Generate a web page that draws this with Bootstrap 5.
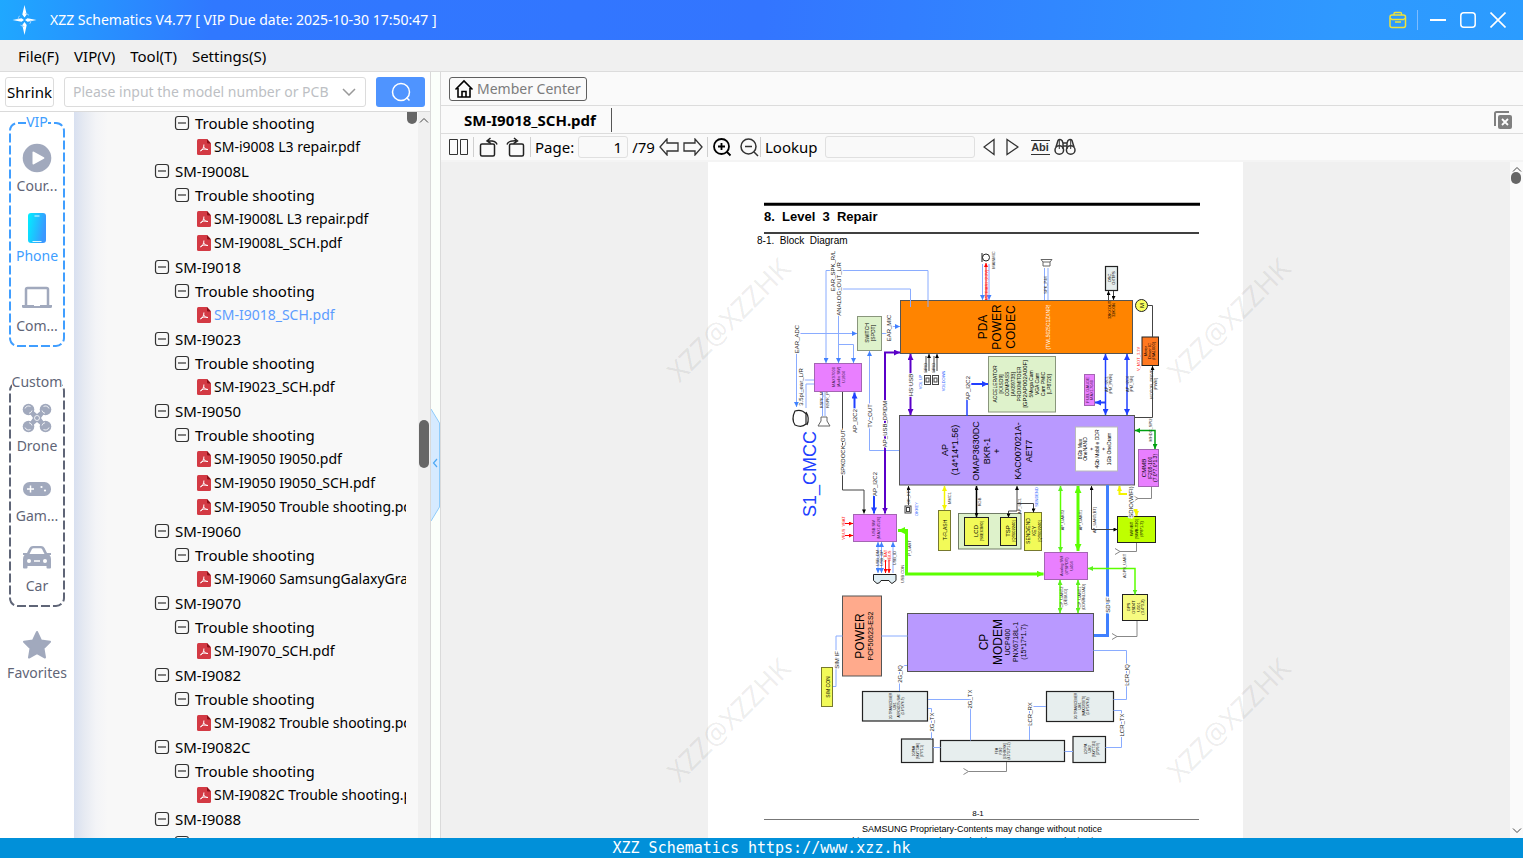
<!DOCTYPE html>
<html lang="en">
<head>
<meta charset="utf-8">
<meta name="viewport" content="width=device-width, initial-scale=1">
<title>XZZ Schematics</title>
<link href="https://cdn.jsdelivr.net/npm/bootstrap@5.3.0/dist/css/bootstrap.min.css" rel="stylesheet">
<style>
  body { font-family: "Noto Sans", "Open Sans", sans-serif; font-size: 15px; line-height: 24px; color: #000; background: #fafafa; }
  button { font: inherit; color: inherit; }
  svg { display: block; flex: none; }
  .titlebar, .menubar, .searchrow, .barrow, .toolstrip { flex: none; }
  .titlebar { height: 40px; padding: 0 17px 0 10px; font-size: 14px; color: #fff; background: linear-gradient(95deg, #1fa8ff 0, #3078ff 14%, #3375ff 50%, #2f99ff 88%, #2b9cff 100%); }
  .titlebar button, .toolstrip button, .plain { border: 0; background: none; padding: 0; }
  .titlebar .rule { width: 1px; height: 20px; margin: 0 12px 0 10px; background: #7ebcff; }
  .winbtns { gap: 14px; }
  .menubar { height: 32px; padding: 0 18px; gap: 15px; background: #f0f0f0; border-bottom: 1px solid #dcdcdc; }
  .menubar a { color: #000; text-decoration: none; }
  .left-pane { width: 431px; border-right: 1px solid #d9d9d9; background: #fff; }
  .searchrow { height: 40px; padding: 0 5px; border-bottom: 1px solid #dadada; }
  .boxed { height: 30px; border: 1px solid #dcdcdc; border-radius: 3px; background: #fff; }
  .shrink { width: 49px; padding: 0; margin-right: 10px; }
  .combo { flex: 1; margin-right: 10px; padding-right: 9px; font-size: 14px; }
  .combo input { border: 0; outline: 0; background: none; width: 100%; min-width: 0; padding: 0 0 0 8px; }
  .combo input::placeholder { color: #bdbfc4; opacity: 1; }
  .go { width: 49px; height: 30px; border: 0; border-radius: 3px; background: #4f94ff; }
  .catbar { width: 74px; padding-top: 10px; color: #5f6577; background: #fff; }
  .group { display: flow-root; width: 56px; height: 225px; margin: 0 auto; position: relative; }
  .group + .group { margin-top: 35px; }
  .group .outline { position: absolute; inset: 0; width: 100%; height: 100%; overflow: visible; }
  .group h2 { font-size: 14px; line-height: 20px; font-weight: 400; margin: -10px 0 0; position: relative; text-align: center; white-space: nowrap; }
  .group h2 span { background: #fff; display: inline-block; }
  .vip { color: #409eff; }
  .cat { display: flex; flex-direction: column; align-items: center; width: 100%; height: 70px; padding: 9px 0 0; border: 0; background: none; font-size: 14px; line-height: 20px; color: #5f6577; position: relative; white-space: nowrap; }
  .cat svg { width: 34px; height: 34px; margin-bottom: 1px; }
  .cat.active { color: #409eff; }
  .favorites { margin-top: 12px; }
  .tree-pane { background: linear-gradient(90deg, #d8e0f0 0, #e6eaf2 10px, #f3f4f7 22px, #f8f8f8 34px); overflow: hidden; position: relative; }
  .tree { list-style: none; margin: -1px 12px 0 0; padding: 0 0 0 80px; overflow: hidden; }
  .tree ul { list-style: none; margin: 0; padding: 0 0 0 20px; }
  .node { display: flex; align-items: center; height: 24px; gap: 5px; white-space: nowrap; color: #000; text-decoration: none; }
  .node svg { width: 16px; height: 16px; }
  .file { padding-left: 2px; gap: 2px; font-size: 14px; }
  .file.selected { color: #5c9cff; }
  .vscroll { width: 12px; background: #f0f0f0; position: relative; }
  .thumb { position: absolute; background: #666; border-radius: 5px; width: 10px; left: 1px; }
  .thumb-side { top: 308px; height: 48px; }
  .thumb-tree { left: auto; right: 1px; top: -8px; height: 20px; }
  .thumb-view { top: 10px; height: 12px; }
  .splitter { width: 10px; padding-top: 20px; background: #fbfffb; border-right: 1px solid #dadada; }
  .barrow { background: #fafafa; border-bottom: 1px solid #dcdcdc; }
  .homerow { height: 34px; }
  .member { height: 24px; padding: 0 5px 0 4px; border: 1px solid #5f5f5f; border-radius: 3px; color: #7c7c7c; background: #fafafa; gap: 3px; font-size: 14px; line-height: 20px; }
  .tabrow { height: 28px; padding-right: 11px; }
  .doctab { padding: 0 15px 0 23px; border-right: 1px solid #555; font-weight: 700; height: 24px; }
  .toolstrip { height: 28px; padding-left: 8px; background: #fafafa; border-bottom: 2px solid #f4f4f4; }
  .toolstrip .rule { width: 1px; height: 20px; background: #d0d0d0; }
  .toolstrip input { height: 22px; border: 1px solid #e0e0e0; border-radius: 3px; background: #f9f9f9; padding: 0 5px; outline: 0; }
  .pageno { width: 50px; text-align: right; }
  .lookup { width: 150px; }
  .viewer { background: #f0f0f0; overflow: hidden; }
  .paper { background: #fff; width: 535px; height: 757px; }
  .paper svg { overflow: visible; }
  .viewscroll { width: 13px; background: #fafafa; position: relative; }
  .flip { transform: rotate(180deg); }
  .statusbar { height: 20px; background: #0190d9; color: #fff; font: 15px/20px "DejaVu Sans Mono", monospace; text-align: center; }
  .statusbar a { color: #fff; text-decoration: none; }
  .sheet { font-family: "Liberation Sans", Arial, sans-serif; }
  .v { text-anchor: middle; }
  .t18 { font-size: 18px; } .t12 { font-size: 12px; } .t9 { font-size: 9px; } .t7 { font-size: 7px; } .t6 { font-size: 6px; } .t5 { font-size: 5px; } .t4 { font-size: 4px; } .t3 { font-size: 3px; }
  .lab { paint-order: stroke; stroke: #fff; stroke-width: 2px; }
  .wm { font-family: "Noto Sans", sans-serif; font-size: 28px; fill: #000; fill-opacity: .08; text-anchor: middle; }
</style>
</head>
<body class="vh-100 d-flex flex-column overflow-hidden">

<svg width="0" height="0" class="position-absolute" aria-hidden="true">
  <symbol id="minus" viewBox="0 0 16 16"><rect x="1.5" y="1.5" width="13" height="13" rx="2.5" fill="none" stroke="#333" stroke-width="1.2"/><path d="M4 8h8" stroke="#333" stroke-width="1.2"/></symbol>
  <symbol id="pdf" viewBox="0 0 16 16"><path d="M1 1.500q0-1.500 1.500-1.500H11l4 4.500V14.500q0 1.500-1.500 1.500h-11Q1 16 1 14.500z" fill="#d33a44"/><path d="M11 0l4 4.500h-3q-1 0-1-1z" fill="#8d1018"/><path d="M4.500 12c1.800-.6 3.700-4 3.400-6.500M7.600 7.500c.6 2 2.300 3.200 4.400 3M4.500 12c1-2 4-2.400 7.500-1.500" fill="none" stroke="#fff" stroke-width="1"/></symbol>
  <symbol id="up" viewBox="0 0 10 6"><path d="M1 5.500L5 1.500l4 4" fill="none" stroke="#444" stroke-width="1"/></symbol>
</svg>

<header class="titlebar d-flex align-items-center">
  <svg width="28" height="30" viewBox="0 0 28 30"><g fill="#fff"><path d="M14.500 0l2.200 9.500-2.200 3-2.200-3zM14.500 30l2.200-10-2.200-3-2.200 3zM2.500 15l9-1.800L14 15l-2.500 1.800zM26.500 15l-9-1.800L15 15l2.500 1.800z"/></g><circle cx="14.500" cy="15" r="6.500" fill="none" stroke="#9fd4ff" stroke-width="1" stroke-dasharray="4 6.200"/></svg>
  <span class="ms-2 ps-1 flex-grow-1">XZZ Schematics V4.77 [ VIP Due date: 2025-10-30 17:50:47 ]</span>
  <button aria-label="Toolbox"><svg width="18" height="18" viewBox="0 0 18 18" fill="none" stroke="#f0e438" stroke-width="1.500"><rect x="1" y="4" width="15.500" height="12.500" rx="2"/><path d="M5 4V2.500Q5 1.500 6 1.500h5.500q1 0 1 1V4M1 7l2 1.500h11.500L16.500 7M6 11h6" stroke-width="1.300"/></svg></button>
  <span class="rule"></span>
  <div class="winbtns d-flex align-items-center">
    <button aria-label="Minimize"><svg width="16" height="16" viewBox="0 0 16 16"><path d="M0 8h16" stroke="#fff" stroke-width="2"/></svg></button>
    <button aria-label="Maximize"><svg width="16" height="16" viewBox="0 0 16 16"><rect x=".8" y=".8" width="14.400" height="14.400" rx="3" fill="none" stroke="#fff" stroke-width="1.500"/></svg></button>
    <button aria-label="Close"><svg width="16" height="16" viewBox="0 0 16 16"><path d="M.5.500l15 15M15.500.500l-15 15" stroke="#fff" stroke-width="1.600"/></svg></button>
  </div>
</header>

<nav class="menubar d-flex align-items-center">
  <a href="#">File(F)</a><a href="#">VIP(V)</a><a href="#">Tool(T)</a><a href="#">Settings(S)</a>
</nav>

<main class="d-flex flex-grow-1 overflow-hidden">
  <section class="left-pane d-flex flex-column flex-shrink-0">
    <div class="searchrow d-flex align-items-center">
      <button class="boxed shrink">Shrink</button>
      <div class="boxed combo d-flex align-items-center">
        <input type="text" aria-label="Model number or PCB" placeholder="Please input the model number or PCB">
        <svg width="14" height="8" viewBox="0 0 14 8"><path d="M1 1l6 6 6-6" fill="none" stroke="#999" stroke-width="1.500"/></svg>
      </div>
      <button class="go d-flex align-items-center justify-content-center" aria-label="Search"><svg width="20" height="20" viewBox="0 0 20 20" fill="none" stroke="#fff" stroke-width="1.500"><circle cx="10" cy="10" r="8.500"/><path d="M15.500 15.500l3 3"/></svg></button>
    </div>
    <div class="d-flex flex-grow-1 overflow-hidden">
      <aside class="catbar flex-shrink-0">
        <div class="group vip">
          <svg class="outline" viewBox="0 0 56 225"><rect x="1" y="1" width="54" height="223" rx="8" fill="none" stroke="#409eff" stroke-width="2" stroke-dasharray="9 3"/></svg>
          <h2><span>VIP</span></h2>
          <button class="cat"><svg viewBox="0 0 34 34"><circle cx="17" cy="17" r="14.300" fill="#a1a9bd"/><path d="M12.500 11.500q0-1.500 1.400-.8l10 5.500q1.200.8 0 1.500l-10 5.500q-1.400.7-1.400-.8z" fill="#fff"/></svg>Cour...</button>
          <button class="cat active"><svg viewBox="0 0 34 34"><defs><linearGradient id="ph" y2=".3"><stop stop-color="#00f0ff"/><stop offset="1" stop-color="#3a98ff"/></linearGradient></defs><rect x="8" y="2" width="18" height="30" rx="3" fill="url(#ph)"/><path d="M14.500 5h5M12.500 30.500h9" stroke="#dffaff" stroke-width="1.200"/></svg>Phone</button>
          <button class="cat"><svg viewBox="0 0 34 34"><path d="M6 24V8.500Q6 7 7.500 7h19Q28 7 28 8.500V24" fill="none" stroke="#a1a9bd" stroke-width="2.500"/><path d="M2 24h30v1.500q0 1.500-1.500 1.500h-27Q2 27 2 25.500z" fill="#a1a9bd"/><path d="M14 24.500h6" stroke="#fff"/></svg>Com...</button>
        </div>
        <div class="group">
          <svg class="outline" viewBox="0 0 56 225"><rect x="1" y="1" width="54" height="223" rx="8" fill="none" stroke="#5f6577" stroke-width="2" stroke-dasharray="9 3"/></svg>
          <h2 class="d-flex justify-content-center"><span>Custom</span></h2>
          <button class="cat"><svg viewBox="0 0 34 34"><g fill="#a1a9bd"><path d="M8 10L10.500 7.500 17 13l6.500-5.500L26 10l-5 7 5 7-2.500 2.500L17 21l-6.500 5.500L8 24l5-7z"/><circle cx="8.500" cy="8.500" r="5.800"/><circle cx="25.500" cy="8.500" r="5.800"/><circle cx="8.500" cy="25.500" r="5.800"/><circle cx="25.500" cy="25.500" r="5.800"/></g><g fill="none" stroke="#fff" stroke-width=".8"><path d="M5 7.500a3.800 3.800 0 0 1 5.500-2M29 7.500a3.800 3.800 0 0 0-5.500-2M5 26.500a3.800 3.800 0 0 0 5.500 2M29 26.500a3.800 3.800 0 0 1-5.500 2"/><path d="M12 9.500a3.800 3.800 0 0 1-3 2.800M22 9.500a3.800 3.800 0 0 0 3 2.800M12 24.500a3.800 3.800 0 0 0-3-2.800M22 24.500a3.800 3.800 0 0 1 3-2.800"/><circle cx="17" cy="17" r="2.500"/></g></svg>Drone</button>
          <button class="cat"><svg viewBox="0 0 34 34"><rect x="3" y="11" width="28" height="14" rx="6.500" fill="#a1a9bd"/><path d="M7 18h7M10.500 14.500v7" stroke="#fff" stroke-width="1.500"/><circle cx="21.500" cy="16" r="1.100" fill="#fff"/><circle cx="25" cy="19.500" r="1.100" fill="#fff"/></svg>Gam...</button>
          <button class="cat"><svg viewBox="0 0 34 34"><path fill="#a1a9bd" fill-rule="evenodd" d="M3 12h4l2.500-5Q10.500 5 13 5h8q2.500 0 3.500 2L27 12h4v2h-1.500q1.500 1.500 1.500 4v8.500q0 1-1 1h-2.500q-1 0-1-1V25h-19v1.500q0 1-1 1H4q-1 0-1-1V18q0-2.500 1.500-4H3zm6.500 1h15L22 8q-.5-.8-1.500-.8h-7Q12.500 7.200 12 8z"/><circle cx="9" cy="20" r="2" fill="#fff"/><circle cx="25" cy="20" r="2" fill="#fff"/><path d="M14 20h6" stroke="#fff" stroke-width="1.500"/></svg>Car</button>
        </div>
        <button class="cat favorites"><svg viewBox="0 0 34 34"><path d="M17 4l4 8.500 9 1.300-6.500 6.500L25 29.500l-8-4.300-8 4.300 1.500-9.200L4 13.800l9-1.300z" fill="#a1a9bd" stroke="#a1a9bd" stroke-width="2" stroke-linejoin="round"/></svg>Favorites</button>
      </aside>
      <div class="tree-pane flex-grow-1">
        <span class="thumb thumb-tree"></span>
        <ul class="tree">
          <li><ul>
            <li><button class="node plain"><svg><use href="#minus"/></svg>Trouble shooting</button><ul>
              <li><a class="node file" href="#"><svg><use href="#pdf"/></svg>SM-i9008 L3 repair.pdf</a></li></ul></li></ul></li>
          <li><button class="node plain"><svg><use href="#minus"/></svg>SM-I9008L</button><ul>
            <li><button class="node plain"><svg><use href="#minus"/></svg>Trouble shooting</button><ul>
              <li><a class="node file" href="#"><svg><use href="#pdf"/></svg>SM-I9008L L3 repair.pdf</a></li>
              <li><a class="node file" href="#"><svg><use href="#pdf"/></svg>SM-I9008L_SCH.pdf</a></li></ul></li></ul></li>
          <li><button class="node plain"><svg><use href="#minus"/></svg>SM-I9018</button><ul>
            <li><button class="node plain"><svg><use href="#minus"/></svg>Trouble shooting</button><ul>
              <li><a class="node file selected" href="#"><svg><use href="#pdf"/></svg>SM-I9018_SCH.pdf</a></li></ul></li></ul></li>
          <li><button class="node plain"><svg><use href="#minus"/></svg>SM-I9023</button><ul>
            <li><button class="node plain"><svg><use href="#minus"/></svg>Trouble shooting</button><ul>
              <li><a class="node file" href="#"><svg><use href="#pdf"/></svg>SM-I9023_SCH.pdf</a></li></ul></li></ul></li>
          <li><button class="node plain"><svg><use href="#minus"/></svg>SM-I9050</button><ul>
            <li><button class="node plain"><svg><use href="#minus"/></svg>Trouble shooting</button><ul>
              <li><a class="node file" href="#"><svg><use href="#pdf"/></svg>SM-I9050 I9050.pdf</a></li>
              <li><a class="node file" href="#"><svg><use href="#pdf"/></svg>SM-I9050 I9050_SCH.pdf</a></li>
              <li><a class="node file" href="#"><svg><use href="#pdf"/></svg>SM-I9050 Trouble shooting.pdf</a></li></ul></li></ul></li>
          <li><button class="node plain"><svg><use href="#minus"/></svg>SM-I9060</button><ul>
            <li><button class="node plain"><svg><use href="#minus"/></svg>Trouble shooting</button><ul>
              <li><a class="node file" href="#"><svg><use href="#pdf"/></svg>SM-I9060 SamsungGalaxyGrand.pdf</a></li></ul></li></ul></li>
          <li><button class="node plain"><svg><use href="#minus"/></svg>SM-I9070</button><ul>
            <li><button class="node plain"><svg><use href="#minus"/></svg>Trouble shooting</button><ul>
              <li><a class="node file" href="#"><svg><use href="#pdf"/></svg>SM-I9070_SCH.pdf</a></li></ul></li></ul></li>
          <li><button class="node plain"><svg><use href="#minus"/></svg>SM-I9082</button><ul>
            <li><button class="node plain"><svg><use href="#minus"/></svg>Trouble shooting</button><ul>
              <li><a class="node file" href="#"><svg><use href="#pdf"/></svg>SM-I9082 Trouble shooting.pdf</a></li></ul></li></ul></li>
          <li><button class="node plain"><svg><use href="#minus"/></svg>SM-I9082C</button><ul>
            <li><button class="node plain"><svg><use href="#minus"/></svg>Trouble shooting</button><ul>
              <li><a class="node file" href="#"><svg><use href="#pdf"/></svg>SM-I9082C Trouble shooting.pdf</a></li></ul></li></ul></li>
          <li><button class="node plain"><svg><use href="#minus"/></svg>SM-I9088</button><ul>
            <li><button class="node plain"><svg><use href="#minus"/></svg>Trouble shooting</button></li></ul></li>
        </ul>
      </div>
      <div class="vscroll flex-shrink-0"><svg class="mx-auto mt-1" width="10" height="8" viewBox="0 0 10 6"><use href="#up"/></svg><span class="thumb thumb-side"></span></div>
    </div>
  </section>

  <div class="splitter d-flex align-items-center flex-shrink-0">
    <button class="plain" aria-label="Collapse panel"><svg width="9" height="112" viewBox="0 0 9 112"><path d="M0 0l8.500 14v84L0 112" fill="#d6eaff" stroke="#8ecbfa" stroke-width="1"/><path d="M6 50l-3.500 4L6 58" fill="none" stroke="#4da8f5" stroke-width="1.200"/></svg></button>
  </div>

  <section class="d-flex flex-column flex-grow-1 overflow-hidden">
    <div class="barrow homerow d-flex align-items-center px-2">
      <button class="member d-flex align-items-center"><svg width="20" height="20" viewBox="0 0 20 20" fill="none" stroke="#000" stroke-width="1.600"><path d="M1.500 10.500L10 2l8.500 8.500M4 9v9h12V9M8 18v-5.500h4V18"/></svg>Member Center</button>
    </div>
    <div class="barrow tabrow d-flex align-items-center">
      <div class="doctab">SM-I9018_SCH.pdf</div>
      <button class="plain ms-auto" aria-label="Close all tabs"><svg width="18" height="18" viewBox="0 0 18 18"><path d="M1 15V2.500Q1 1 2.500 1H15" fill="none" stroke="#808080" stroke-width="2"/><rect x="4" y="4" width="14" height="14" rx="2" fill="#808080"/><path d="M8 8l6 6M14 8l-6 6" stroke="#fff" stroke-width="1.800"/></svg></button>
    </div>
    <div class="toolstrip d-flex align-items-center">
      <button aria-label="Two pages"><svg width="24" height="20" viewBox="0 0 24 20" fill="none" stroke="#333"><path d="M.5 2.500h8v15h-8zM11.500 2.500h7v15h-7z"/></svg></button>
      <span class="rule me-1"></span>
      <button aria-label="Rotate left"><svg width="20" height="20" viewBox="0 0 20 20" fill="none" stroke="#222" stroke-width="1.500"><rect x="2.500" y="7" width="14" height="12" rx="1.500"/><path d="M19 7.500Q18 3.500 10 3.800M12.500 1L9 3.900l4 2.800"/></svg></button>
      <button class="ms-2" aria-label="Rotate right"><svg width="20" height="20" viewBox="0 0 20 20" fill="none" stroke="#222" stroke-width="1.500"><rect x="3.500" y="7" width="14" height="12" rx="1.500"/><path d="M1 7.500Q2 3.500 10 3.800M8 1l3.500 2.900-4 2.800"/></svg></button>
      <span class="rule ms-1 me-1"></span>
      <label for="pg">Page:</label>
      <input id="pg" class="pageno ms-1" type="text" value="1">
      <span class="ms-1">/79</span>
      <button class="ms-1" aria-label="Previous page"><svg width="20" height="18" viewBox="0 0 20 18" fill="none" stroke="#333" stroke-width="1.300"><path d="M1 9l7-8v4h11v8H8v4z"/></svg></button>
      <button class="ms-1" aria-label="Next page"><svg width="20" height="18" viewBox="0 0 20 18" fill="none" stroke="#333" stroke-width="1.300"><path d="M19 9l-7-8v4H1v8h11v4z"/></svg></button>
      <span class="rule ms-1 me-1"></span>
      <button aria-label="Zoom in"><svg width="20" height="20" viewBox="0 0 20 20" fill="none" stroke="#000" stroke-width="1.800"><circle cx="9.500" cy="9.500" r="7.500"/><path d="M15 15l3.500 3.500M6 9.500h7M9.500 6v7"/></svg></button>
      <button class="ms-2" aria-label="Zoom out"><svg width="20" height="20" viewBox="0 0 20 20" fill="none" stroke="#333" stroke-width="1.500"><circle cx="8.500" cy="9.500" r="7.500"/><path d="M14 15l4 4M5 9.500h7"/></svg></button>
      <span class="rule me-1"></span>
      <label for="lk">Lookup</label>
      <input id="lk" class="lookup ms-2" type="text">
      <button class="ms-2" aria-label="Find previous"><svg width="14" height="18" viewBox="0 0 14 18" fill="none" stroke="#333" stroke-width="1.300"><path d="M11 1.500v15L1 9z"/></svg></button>
      <button class="ms-2" aria-label="Find next"><svg width="14" height="18" viewBox="0 0 14 18" fill="none" stroke="#333" stroke-width="1.300"><path d="M2 1.500v15L13 9z"/></svg></button>
      <button class="ms-2 ps-1" aria-label="Match whole word"><svg width="19" height="20" viewBox="0 0 19 20"><path d="M0 3.500h19M0 17.500h19" stroke="#333"/><text x="9" y="14" text-anchor="middle" font-family="Liberation Sans" font-weight="700" font-size="11" fill="#333">Abi</text></svg></button>
      <button class="ms-1" aria-label="Search all"><svg width="22" height="18" viewBox="0 0 22 18" fill="none" stroke="#333" stroke-width="1.500"><path d="M2 9l2-6.500q1.500-2 4 0L9 5h4l1-2.500q2.500-2 4 0L20 9M9 5v6M13 5v6M9 8h4"/><circle cx="5.300" cy="12" r="4.300"/><circle cx="16.700" cy="12" r="4.300"/><path d="M5.300 2v9M16.700 2v9" stroke-width="1"/></svg></button>
    </div>
    <div class="d-flex flex-grow-1 overflow-hidden">
      <div class="viewer flex-grow-1 d-flex justify-content-center">
        <div class="paper flex-shrink-0">
<svg class="sheet" width="535" height="757" viewBox="708 162 535 757" role="img" aria-label="Level 3 repair block diagram">
<defs>
  <marker id="ab" viewBox="0 0 6 6" refX="6" refY="3" markerWidth="5" markerHeight="5" markerUnits="userSpaceOnUse" orient="auto-start-reverse"><path d="M0 0l6 3-6 3z" fill="#4080ff"/></marker>
  <marker id="ad" viewBox="0 0 6 6" refX="6" refY="3" markerWidth="7" markerHeight="6" markerUnits="userSpaceOnUse" orient="auto-start-reverse"><path d="M0 0l6 3-6 3z" fill="#2040ff"/></marker>
  <marker id="ap" viewBox="0 0 6 6" refX="6" refY="3" markerWidth="6" markerHeight="6" markerUnits="userSpaceOnUse" orient="auto-start-reverse"><path d="M0 0l6 3-6 3z" fill="#5a00c8"/></marker>
  <marker id="ak" viewBox="0 0 6 6" refX="6" refY="3" markerWidth="5" markerHeight="4" markerUnits="userSpaceOnUse" orient="auto-start-reverse"><path d="M0 0l6 3-6 3z" fill="#000"/></marker>
  <marker id="ag" viewBox="0 0 6 6" refX="6" refY="3" markerWidth="7" markerHeight="7" markerUnits="userSpaceOnUse" orient="auto-start-reverse"><path d="M0 0l6 3-6 3z" fill="#5cff00"/></marker>
  <marker id="as" viewBox="0 0 6 6" refX="6" refY="3" markerWidth="5" markerHeight="5" markerUnits="userSpaceOnUse" orient="auto-start-reverse"><path d="M0 0l6 3-6 3z" fill="#5cf020"/></marker>
  <marker id="aG" viewBox="0 0 6 6" refX="6" refY="3" markerWidth="5" markerHeight="5" markerUnits="userSpaceOnUse" orient="auto-start-reverse"><path d="M0 0l6 3-6 3z" fill="#00a010"/></marker>
  <marker id="ar" viewBox="0 0 6 6" refX="6" refY="3" markerWidth="5" markerHeight="4" markerUnits="userSpaceOnUse" orient="auto-start-reverse"><path d="M0 0l6 3-6 3z" fill="#f00"/></marker>
  <marker id="ay" viewBox="0 0 6 6" refX="6" refY="3" markerWidth="5" markerHeight="6" markerUnits="userSpaceOnUse" orient="auto-start-reverse"><path d="M0 0l6 3-6 3z" fill="#f4f400"/></marker>
</defs>
<g class="wm"><text transform="translate(736 327) rotate(-45)">XZZ@XZZHK</text><text transform="translate(1236 327) rotate(-45)">XZZ@XZZHK</text><text transform="translate(736 727) rotate(-45)">XZZ@XZZHK</text><text transform="translate(1236 727) rotate(-45)">XZZ@XZZHK</text></g>
<path d="M764 204.200h436" stroke="#000" stroke-width="3"/><path d="M764 233h435" stroke="#000" stroke-width="1.500"/>
<text x="764" y="221" font-size="13" font-weight="700">8.&nbsp; Level&nbsp; 3&nbsp; Repair</text>
<text x="757" y="244" font-size="10">8-1.&nbsp; Block&nbsp; Diagram</text>
<!-- boxes -->
<g stroke="#555" stroke-width="1">
  <rect x="900.500" y="300.500" width="232" height="53" fill="#ff8400"/>
  <rect x="899.500" y="415.500" width="235" height="69.500" fill="#b999ff"/>
  <rect x="907.500" y="613.500" width="186" height="58" fill="#b999ff"/>
  <rect x="842.500" y="596" width="39" height="80" fill="#ffaa8c"/>
  <rect x="1075.500" y="427" width="42" height="44" fill="#fff" stroke="#bbb"/>
  <rect x="988.500" y="356.500" width="67" height="55.500" fill="#def2cb" stroke="#89967c"/>
  <rect x="857.500" y="316.500" width="24" height="34" fill="#def2cb" stroke="#89967c"/>
  <rect x="958.500" y="513.500" width="62.500" height="35.500" fill="#def2cb" stroke="#707c66"/>
  <g fill="#e97fff" stroke="#a465b3"><rect x="814.500" y="363.500" width="47" height="28"/><rect x="853.500" y="514.500" width="43" height="27"/><rect x="1044.500" y="552.500" width="43" height="27"/><rect x="1138.500" y="449.500" width="20" height="37"/><rect x="1084.500" y="374.500" width="10" height="31"/></g>
  <g fill="#f2fa58" stroke="#77792e"><rect x="938.500" y="510.500" width="12" height="40"/><rect x="964.500" y="517.500" width="24" height="28" stroke="#222"/><rect x="1000.500" y="517.500" width="16" height="28" stroke="#222"/><rect x="1024.500" y="512.500" width="17" height="38"/><rect x="821.500" y="667.500" width="11" height="39"/></g>
  <rect x="1117.500" y="516.500" width="38" height="26" fill="#bfff00" stroke="#222"/>
  <rect x="1122.500" y="594.500" width="25" height="26" fill="#f6fb80" stroke="#222"/>
  <rect x="1142" y="337" width="16.500" height="28.500" fill="#ff7820" stroke="#222"/>
  <g fill="#e7eeee" stroke="#222" stroke-width="1.200"><rect x="1105.500" y="266.500" width="12" height="24"/><rect x="862.500" y="691.500" width="65" height="29.500"/><rect x="901.500" y="739" width="31.500" height="23.500"/><rect x="940.500" y="740.500" width="124" height="21"/><rect x="1073" y="736.500" width="32.500" height="26"/><rect x="1046.500" y="691.500" width="67" height="30"/></g>
  <circle cx="1141.500" cy="305.500" r="6" fill="#faff60" stroke="#222"/>
</g>
<!-- thin blue signals -->
<g fill="none" stroke="#8aacff" stroke-width="1">
  <path d="M928 307V270.500H826V363" marker-end="url(#ab)"/><path d="M910.500 307V289H838.500V363" marker-end="url(#ab)"/><path d="M838.500 344.500h15V363" marker-end="url(#ab)"/>
  <path d="M799 333.500h58" marker-end="url(#ab)"/><path d="M882 333.500h6"/><path d="M890 326.500h10" marker-end="url(#ab)"/><path d="M796.500 350v57" marker-end="url(#ab)"/>
  <path d="M899 450.500h-29.500V351" marker-end="url(#ab)"/><path d="M814 380h-12v12M814 384h-8v24M822.500 392v24M825 392v24"/>
  <path d="M878 542v31" marker-start="url(#ab)" marker-end="url(#ab)"/><path d="M881.500 542v31" marker-start="url(#ab)" marker-end="url(#ab)"/><path d="M893 573v-31" marker-end="url(#ab)"/>
  <path d="M982.500 264v36" marker-end="url(#ab)"/><path d="M989 264v36" marker-end="url(#ab)"/><path d="M1044.500 268v32M1048 268v32"/>
  <path d="M881.500 636h26M842.500 636H836v50.500h-3M907 665.500h-7.500V691M928 699.500h42.500v41M928 708.500h3.500V739M933 747.500h7.500M1064.500 751.500h8.500M1046 706.500h-16.500V740M1113.500 699.500h13v-49h-33M1113.500 710.500h8v37h-16"/>
</g>
<!-- buses -->
<g fill="none" stroke-width="2">
  <path d="M900 352.500h-15V513.500" stroke="#5a00c8" marker-start="url(#ap)" marker-end="url(#ap)"/><path d="M910.500 354v61" stroke="#5a00c8" marker-start="url(#ap)" marker-end="url(#ap)"/>
  <g stroke="#2040ff"><path d="M967 416v-18" stroke-width="1.500"/><path d="M1105.500 402.500H1095" marker-end="url(#ad)"/><path d="M854.500 410V392.500" marker-end="url(#ad)"/><path d="M970 384h18" marker-end="url(#ad)"/><path d="M874 495v18.500" marker-end="url(#ad)"/><path d="M1105.500 354v61" stroke-width="1.500" marker-start="url(#ad)" marker-end="url(#ad)"/><path d="M1127 354v61" stroke-width="1.500" marker-start="url(#ad)" marker-end="url(#ad)"/></g>
  <path d="M1107.500 485v150.500H1094" stroke="#4080ff" stroke-width="3"/>
  <g stroke="#5cff00"><path d="M898 530.500h8.500V574H1043.500" stroke-width="3" marker-start="url(#ag)" marker-end="url(#ag)"/><path d="M1078 486v65" stroke-width="3" marker-start="url(#ag)" marker-end="url(#ag)"/>
  <path d="M1060.500 486v66" stroke-width="1.500" marker-start="url(#as)" marker-end="url(#as)"/><path d="M1060 580v33" stroke-width="1.500" marker-start="url(#as)" marker-end="url(#as)"/><path d="M1078 580v33" stroke-width="1.500" marker-start="url(#as)" marker-end="url(#as)"/><path d="M1088 568.500h47v26" stroke-width="1.500" marker-start="url(#as)" marker-end="url(#as)"/></g>
  <path d="M1135 430.500h20V449" stroke="#00a010" stroke-width="1.500" marker-start="url(#aG)" marker-end="url(#aG)"/>
  <path d="M944.500 486v24" stroke="#f4f400" stroke-width="1.500" marker-start="url(#ay)" marker-end="url(#ay)"/><path d="M1127 494h-7.500v-8" stroke="#f4f400" marker-end="url(#ay)"/><path d="M1132 510h4.500v6" stroke="#f4f400" marker-end="url(#ay)"/>
</g>
<!-- black wires -->
<g fill="none" stroke="#444" stroke-width="1">
  <path d="M842.500 392v98H864v23.500" marker-end="url(#ak)"/><path d="M976.500 486v31" stroke="#000" stroke-width="1.500" marker-start="url(#ak)" marker-end="url(#ak)"/>
  <path d="M1017 486v25h-8.500v6.500" marker-start="url(#ak)" marker-end="url(#ak)"/><path d="M1017 503.500h16.500v9" marker-end="url(#ak)"/><path d="M1091.500 486v43.500h26" marker-start="url(#ak)" marker-end="url(#ak)"/>
  <path d="M908.500 505v-19" marker-end="url(#ak)"/><rect x="905" y="506" width="6" height="7"/><rect x="906.500" y="507.500" width="3" height="4"/>
  <path d="M1147.500 305.500h5V337M1135 417.500h17.500V366" marker-end="url(#ak)"/><path d="M1108.500 300v-9" marker-end="url(#ak)"/><path d="M1113.500 291v9" marker-end="url(#ak)"/>
  <path d="M929 371v-17" marker-end="url(#ak)"/><path d="M937 371v-17" marker-end="url(#ak)"/><path d="M926 356v16M934 356v16"/><rect x="924.500" y="375.500" width="6" height="9"/><rect x="932.500" y="375.500" width="6" height="9"/><rect x="926" y="378" width="3" height="4"/><rect x="934" y="378" width="3" height="4"/>
  <g stroke="#888"><path d="M1151.500 487v11.500H1138l-5-3m5 3l-5 3M1136.500 543v8.500H1120l-5-3m5 3l-5 3M1137 621v15.500h-20l-5-3m5 3l-5 3M1006.500 762v9.500h-38l-5-3m5 3l-5 3"/></g>
  <g stroke="#222"><path d="M795 411q-4 8 0 14 7 3 11-1v-10q-4-5-11-3zM806 412q4 6 1 13" stroke-width="1.200"/><path d="M821 417h6v4l3 5h-12l3-5z" stroke="#666"/><path d="M1043 262h7v4h-7zM1043 262l-2-2.500h11l-2 2.500" stroke="#666"/><circle cx="986" cy="257.500" r="3.500"/><path d="M982 253v9" /></g>
  <path d="M873.500 574.500h22.500v6l-4 3q-2-1-3-3h-8q-1 3-4 3l-3.500-3z" fill="#e0eef4" stroke="#222"/>
</g>
<g fill="none" stroke="#f00"><path d="M986 300v-37" marker-end="url(#ar)"/><path d="M845 523.500h8" marker-end="url(#ar)"/><path d="M845 535.500h8" marker-end="url(#ar)"/><path d="M885.500 560v13" marker-end="url(#ar)"/><path d="M889 560v13" marker-end="url(#ar)"/></g>
<!-- vertical captions: x is minus the page y, y is the page x -->
<g transform="rotate(-90)" class="v">
  <g class="t12"><text x="-327" y="987">PDA</text><text x="-327" y="1001">POWER</text><text x="-327" y="1015">CODEC</text><text x="-642" y="988">CP</text><text x="-642" y="1002">MODEM</text><text x="-636" y="864">POWER</text></g>
  <g class="t9"><text x="-450" y="948">AP</text><text x="-450" y="958">(14*14*1.56)</text><text x="-451" y="979">OMAP3630DC</text><text x="-451" y="990">BKR-1</text><text x="-451" y="1000">+</text><text x="-451" y="1021">KAC007021A-</text><text x="-451" y="1032">AET7</text></g>
  <text class="t18" x="-474" y="816" fill="#2040ff">S1_CMCC</text>
  <g class="t7"><text x="-642" y="1010">UCP400</text><text x="-642" y="1018">PNX6718L-1</text><text x="-642" y="1026">(15*17*1.7)</text><text x="-636" y="873">PCF50623-ES2</text></g>
  <g class="t6"><text x="-384" y="1027">[GP2AP002A00F]</text><text x="-468" y="1146">CMMB</text><text x="-531" y="978">LCD</text><text x="-531" y="1010">TSP</text></g>
  <g class="t5">
    <text x="-327" y="1050" fill="#fff">(TWL5025C1ZXNR)</text>
    <text x="-384" y="997">ACCELERATOR</text><text x="-384" y="1003">[KXSD9]</text><text x="-384" y="1009">COMPASS</text><text x="-384" y="1015">[AK8973B]</text><text x="-384" y="1021">PROXIMITOER</text><text x="-384" y="1033">5Mega Cam</text><text x="-384" y="1039">VGA Cam</text><text x="-384" y="1045">Cam PMIC</text><text x="-384" y="1051">[LP8720]</text>
    <text x="-449" y="1082">8Gb Mux</text><text x="-449" y="1087">OneNAND</text><text x="-449" y="1093">+</text><text x="-449" y="1099">4Gb Mobil e DDR</text><text x="-449" y="1105">+</text><text x="-449" y="1111">1Gb OneDram</text>
    <text x="-333" y="869">SWITCH</text><text x="-333" y="875">[SPDT]</text><text x="-530" y="947">T-FLASH</text><text x="-531" y="1030">SEND/END</text><text x="-531" y="1036">KEY</text><text x="-687" y="830">SIM CON</text>
    <text x="-468" y="1152">IF208-100</text><text x="-468" y="1157">(7.0*7.0*1.3)</text>
  </g>
  <g class="t4" fill="#402050"><text x="-390" y="1089">FUEL GAUGE</text><text x="-390" y="1093">MAX17040</text><text x="-377" y="835">MAX97000</text><text x="-377" y="840">(Audio SW)</text><text x="-377" y="845">U1804</text><text x="-528" y="875">USB SW</text><text x="-528" y="880">(MAX14526)</text><text x="-566" y="1063">Analog SW</text><text x="-566" y="1068">(4*SPDT)</text><text x="-566" y="1073">U404</text></g>
  <g class="t4"><text x="-531" y="983">[S6E63M0]</text><text x="-531" y="1015">[QT602240]</text><text x="-531" y="1041">[QT602240]</text><text x="-529" y="1133">WiFi/BT</text><text x="-529" y="1138">[SWB-T20]</text><text x="-529" y="1143">(8*8*1.3)</text><text x="-607" y="1130">GPS</text><text x="-607" y="1135">GSD4T</text><text x="-607" y="1140">U501</text><text x="-607" y="1144">(3.4*3.2)</text><text x="-351" y="1147">Motor</text><text x="-351" y="1151">Driver IC</text><text x="-351" y="1155">(ISA1000)</text><text x="-278" y="1111">OSC</text><text x="-278" y="1115">OXTFS</text><text x="-310" y="1111">32KXOUT</text><text x="-310" y="1115">32KXIN</text></g>
  <text class="t6" x="-305.500" y="1144">M</text>
  <g class="t3"><text x="-706" y="892">2G TRANSCEIVER</text><text x="-706" y="896">U201</text><text x="-706" y="900">AERO4229+SM6</text><text x="-706" y="904">(5.0*5.0*0.9)</text><text x="-706" y="1077">3G TRANSCEIVER</text><text x="-706" y="1081">U301</text><text x="-706" y="1085">[MAX2392ETI]</text><text x="-706" y="1089">(5.0*5.0*0.8)</text><text x="-751" y="915">2GPAM</text><text x="-751" y="919">[SKY77340]</text><text x="-751" y="923">(6*6*1.1)</text><text x="-751" y="998">FEM</text><text x="-751" y="1002">F202</text><text x="-751" y="1006">[LSH60900]</text><text x="-751" y="1010">(4.5*3.2*1.2)</text><text x="-749" y="1087">LCR PA</text><text x="-749" y="1091">U302</text><text x="-749" y="1095">[SKY77161]</text><text x="-749" y="1099">(3*3*0.9)</text></g>
  <g class="t6 lab" fill="#222">
    <text x="-271" y="835">EAR_SPK_R/L</text><text x="-289" y="841">ANALOG_OUT_L/R</text><text x="-339" y="799">EAR_ADC</text><text x="-328" y="891">EAR_MIC</text><text x="-387" y="803">3.5pi_ear_L/R</text>
    <text x="-416" y="872">TV_OUT</text><text x="-424" y="887">AP_USB_DPIDM</text><text x="-385" y="913">HS USB</text><text x="-388" y="970">AP_I2C2</text><text x="-421" y="857">AP_I2C2</text><text x="-484" y="877">AP_I2C2</text><text x="-452" y="845">SPKDOCK_OUT</text>
    <text x="-660" y="839">SIM IF</text><text x="-674" y="902">2G_IQ</text><text x="-699" y="972">2G_TX</text><text x="-722" y="934">2G_TX</text><text x="-714" y="1032">LCR_RX</text><text x="-675" y="1129">LCR_IQ</text><text x="-725" y="1124">LCR_TX</text><text x="-605" y="1110">SD IF</text><text x="-502" y="1133">SDIO(WIFI)</text>
  </g>
  <g class="t4" fill="#333"><text x="-548" y="911">P_UART</text><text x="-498" y="951">MMC1</text><text x="-502" y="981">RGB</text><text x="-520" y="1064">AP_UART2</text><text x="-520" y="1082">AP_UART1</text><text x="-520" y="1096">AP_UART(BT)</text><text x="-597" y="1063">CP_UART2</text><text x="-597" y="1067">(DEBUG)</text><text x="-597" y="1081">CP_UART1</text><text x="-597" y="1085">(DOWNLOAD)</text><text x="-566" y="1126">AGPS_UART</text><text x="-384" y="1108">AP_I2C1</text><text x="-384" y="1112">(PM_PWR)</text><text x="-384" y="1129">AP_I2C4</text><text x="-384" y="1133">(PM_SR)</text><text x="-384" y="1153">MOTOR_DRIVE</text><text x="-384" y="1157">(PWM)</text><text x="-430" y="1152">MHDC_SPI2</text><text x="-400" y="823">RSPK_M</text><text x="-400" y="829">RSPK_P</text><text x="-496" y="910">OK_KEY</text><text x="-558" y="879">USB_DM</text><text x="-558" y="883">USB_DP</text><text x="-558" y="896">USB_ID</text><text x="-574" y="904">USB CON</text><text x="-506" y="1021">AP_I2C1</text><text x="-260" y="995">MAINMIC</text><text x="-285" y="1047">SPK_P/M</text><text x="-368" y="927">GPIO</text><text x="-368" y="935">GPIO</text></g>
  <g class="t4" fill="#f22"><text x="-285" y="988">MICBIAS1 (2.2V)</text><text x="-528" y="845">VBUS&nbsp; VBAT</text><text x="-556" y="887">V_BAT</text><text x="-556" y="891">VBUS</text><text x="-359" y="1140">V_MOT_3.3V</text></g>
  <g class="t4" fill="#36f"><text x="-382" y="922">VOL UP</text><text x="-381" y="945">VOLDOWN</text><text x="-509" y="918">OKKEY</text><text x="-497" y="1038">SENDEND</text></g>
</g>
<text x="978" y="816" font-size="8" text-anchor="middle">8-1</text><path d="M764 819.500h435" stroke="#777"/>
<text class="t9" x="982" y="832" text-anchor="middle">SAMSUNG Proprietary-Contents may change without notice</text>
<text class="t9" x="975" y="844" text-anchor="middle">This Document cannot be used without Samsung's authorization</text>
</svg>
        </div>
      </div>
      <div class="viewscroll flex-shrink-0 d-flex flex-column justify-content-between align-items-center py-1"><svg width="10" height="6"><use href="#up"/></svg><span class="thumb thumb-view"></span><svg class="flip" width="10" height="6"><use href="#up"/></svg></div>
    </div>
  </section>
</main>

<footer class="statusbar flex-shrink-0">XZZ Schematics <a href="#">https://www.xzz.hk</a></footer>
<script src="https://cdn.jsdelivr.net/npm/bootstrap@5.3.0/dist/js/bootstrap.bundle.min.js"></script>
</body>
</html>
